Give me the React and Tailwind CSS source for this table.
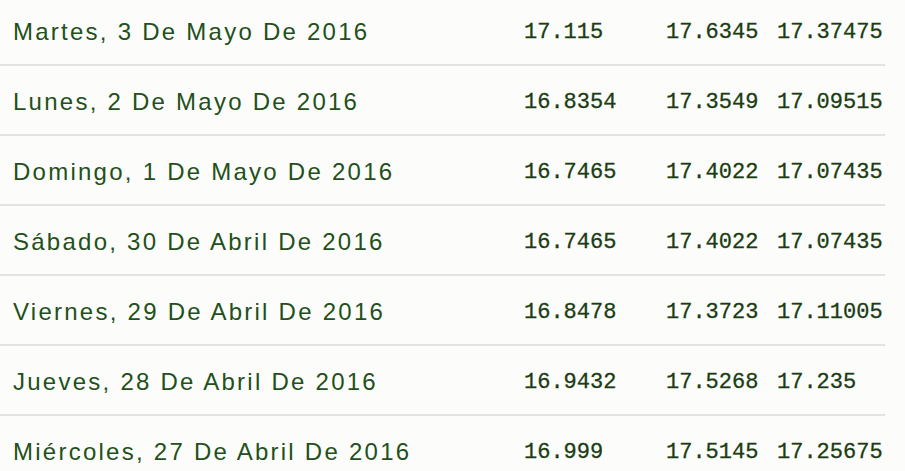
import React from 'react';

const rows = [
    { date: 'Martes, 3 De Mayo De 2016', buy: '17.115', sell: '17.6345', avg: '17.37475' },
    { date: 'Lunes, 2 De Mayo De 2016', buy: '16.8354', sell: '17.3549', avg: '17.09515' },
    { date: 'Domingo, 1 De Mayo De 2016', buy: '16.7465', sell: '17.4022', avg: '17.07435' },
    { date: 'Sábado, 30 De Abril De 2016', buy: '16.7465', sell: '17.4022', avg: '17.07435' },
    { date: 'Viernes, 29 De Abril De 2016', buy: '16.8478', sell: '17.3723', avg: '17.11005' },
    { date: 'Jueves, 28 De Abril De 2016', buy: '16.9432', sell: '17.5268', avg: '17.235' },
    { date: 'Miércoles, 27 De Abril De 2016', buy: '16.999', sell: '17.5145', avg: '17.25675' },
];

const num = "pl-[13px] text-[22px] text-[#1b3c13] [font-family:'Liberation_Mono',monospace] [-webkit-text-stroke:0.3px_#1b3c13]";

export default function App() {
    return (
        <div className="w-[905px] h-[471px] overflow-hidden bg-[#fcfdfa]">
            <div className="w-[885px] -mt-1">
                {rows.map((r, i) => (
                    <div
                        key={i}
                        className="grid grid-cols-[511px_142px_111px_1fr] items-center h-[70px] pt-[4px] border-b-2 border-[#e3e4e1]"
                    >
                        <div className="pl-[13px] text-[24px] tracking-[2.25px] text-[#23501a] [font-family:'Liberation_Sans',Arial,sans-serif] whitespace-nowrap">
                            {r.date}
                        </div>
                        <div className={num}>{r.buy}</div>
                        <div className={num}>{r.sell}</div>
                        <div className={num}>{r.avg}</div>
                    </div>
                ))}
            </div>
        </div>
    );
}
